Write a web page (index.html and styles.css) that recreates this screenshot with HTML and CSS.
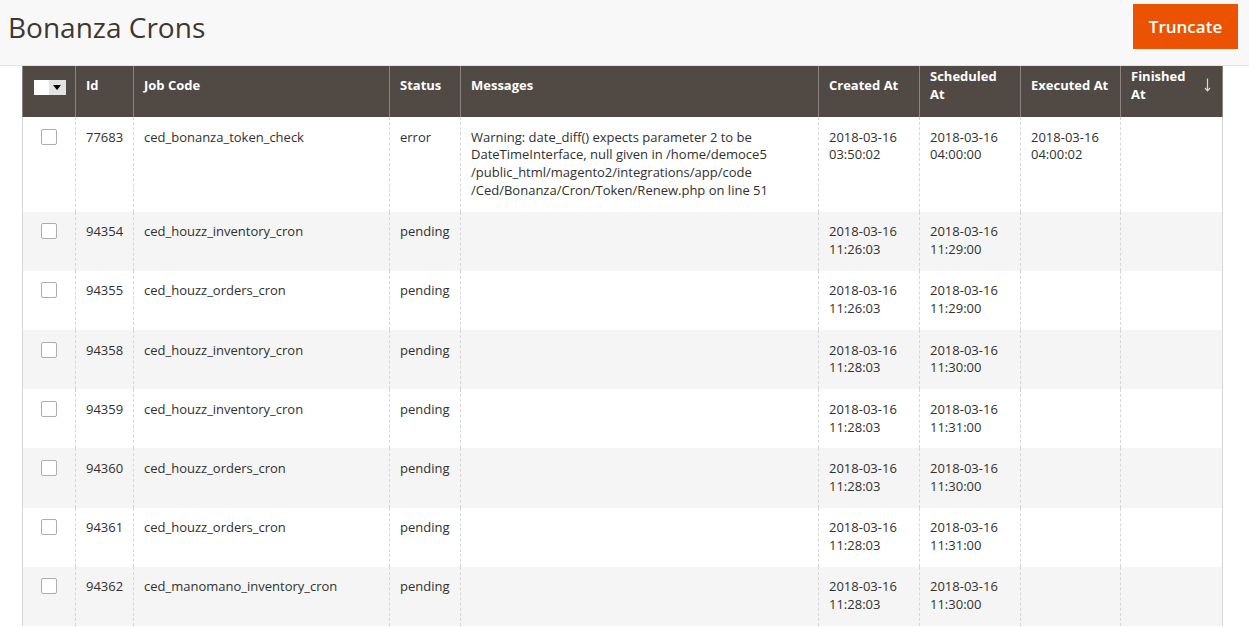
FILE: index.html
```html
<!DOCTYPE html>
<html lang="en">
<head>
  <meta charset="UTF-8">
  <title>Bonanza Crons</title>
  <link rel="stylesheet" href="styles.css">
</head>
<body>

  <div class="page-header">
    <h1 class="page-title">Bonanza Crons</h1>
    <button class="action-primary">Truncate</button>
  </div>

  <div class="grid-wrap">
    <table class="data-grid">
      <colgroup>
        <col style="width:53px">
        <col style="width:58px">
        <col style="width:256px">
        <col style="width:71px">
        <col style="width:358px">
        <col style="width:101px">
        <col style="width:101px">
        <col style="width:100px">
        <col style="width:102px">
      </colgroup>
      <thead>
        <tr>
          <th class="col-select">
            <span class="mass-select"><span class="mass-box"></span><span class="mass-toggle"></span></span>
          </th>
          <th>Id</th>
          <th>Job Code</th>
          <th>Status</th>
          <th>Messages</th>
          <th>Created At</th>
          <th>Scheduled At</th>
          <th>Executed At</th>
          <th class="sorted">Finished At
            <svg class="sort-arrow" width="7" height="14" viewBox="0 0 7 14">
              <path d="M3.5 0.5 V12.5 M1 10 L3.5 12.8 L6 10" fill="none" stroke="#d9d6d3" stroke-width="1.2"/>
            </svg>
          </th>
        </tr>
      </thead>
      <tbody>
        <tr>
          <td class="col-select"><span class="checkbox"></span></td>
          <td>77683</td>
          <td>ced_bonanza_token_check</td>
          <td>error</td>
          <td>Warning: date_diff() expects parameter 2 to be DateTimeInterface, null given in /home/democe5 /public_html/magento2/integrations/app/code /Ced/Bonanza/Cron/Token/Renew.php on line 51</td>
          <td>2018-03-16 03:50:02</td>
          <td>2018-03-16 04:00:00</td>
          <td>2018-03-16 04:00:02</td>
          <td></td>
        </tr>
        <tr>
          <td class="col-select"><span class="checkbox"></span></td>
          <td>94354</td>
          <td>ced_houzz_inventory_cron</td>
          <td>pending</td>
          <td></td>
          <td>2018-03-16 11:26:03</td>
          <td>2018-03-16 11:29:00</td>
          <td></td>
          <td></td>
        </tr>
        <tr>
          <td class="col-select"><span class="checkbox"></span></td>
          <td>94355</td>
          <td>ced_houzz_orders_cron</td>
          <td>pending</td>
          <td></td>
          <td>2018-03-16 11:26:03</td>
          <td>2018-03-16 11:29:00</td>
          <td></td>
          <td></td>
        </tr>
        <tr>
          <td class="col-select"><span class="checkbox"></span></td>
          <td>94358</td>
          <td>ced_houzz_inventory_cron</td>
          <td>pending</td>
          <td></td>
          <td>2018-03-16 11:28:03</td>
          <td>2018-03-16 11:30:00</td>
          <td></td>
          <td></td>
        </tr>
        <tr>
          <td class="col-select"><span class="checkbox"></span></td>
          <td>94359</td>
          <td>ced_houzz_inventory_cron</td>
          <td>pending</td>
          <td></td>
          <td>2018-03-16 11:28:03</td>
          <td>2018-03-16 11:31:00</td>
          <td></td>
          <td></td>
        </tr>
        <tr>
          <td class="col-select"><span class="checkbox"></span></td>
          <td>94360</td>
          <td>ced_houzz_orders_cron</td>
          <td>pending</td>
          <td></td>
          <td>2018-03-16 11:28:03</td>
          <td>2018-03-16 11:30:00</td>
          <td></td>
          <td></td>
        </tr>
        <tr>
          <td class="col-select"><span class="checkbox"></span></td>
          <td>94361</td>
          <td>ced_houzz_orders_cron</td>
          <td>pending</td>
          <td></td>
          <td>2018-03-16 11:28:03</td>
          <td>2018-03-16 11:31:00</td>
          <td></td>
          <td></td>
        </tr>
        <tr>
          <td class="col-select"><span class="checkbox"></span></td>
          <td>94362</td>
          <td>ced_manomano_inventory_cron</td>
          <td>pending</td>
          <td></td>
          <td>2018-03-16 11:28:03</td>
          <td>2018-03-16 11:30:00</td>
          <td></td>
          <td></td>
        </tr>
      </tbody>
    </table>
  </div>

</body>
</html>
```

FILE: styles.css
```css
body {
  margin: 0;
  font-family: "Open Sans", Arial, sans-serif;
  font-size: 13px;
  color: #303030;
  background: #fff;
  overflow: hidden;
}

.page-header {
  display: flex;
  justify-content: space-between;
  align-items: flex-start;
  height: 66px;
  background: #f8f8f8;
  border-bottom: 1px solid #e3e3e3;
  box-sizing: border-box;
  padding: 4px 11px 0 8px;
}

.page-title {
  margin: 0;
  font-size: 28px;
  font-weight: 400;
  color: #41362f;
  line-height: 46px;
}

.action-primary {
  background: #eb5202;
  border: 1px solid #eb5202;
  color: #fff;
  font-family: "Open Sans", Arial, sans-serif;
  font-size: 17px;
  font-weight: 600;
  width: 105px;
  height: 45px;
  padding: 0;
  cursor: pointer;
}

.grid-wrap {
  padding: 0 27px 0 22px;
}

.data-grid {
  width: 1200px;
  table-layout: fixed;
  border-collapse: collapse;
  border-left: 1px solid #d6d6d6;
  border-right: 1px solid #d6d6d6;
}

.data-grid th {
  background: #514943;
  color: #fff;
  font-weight: 700;
  text-align: left;
  vertical-align: middle;
  line-height: 18px;
  height: 36px;
  padding: 1px 10px 14px 10px;
  border-left: 1px solid #8a837f;
  border-right: 1px solid #8a837f;
  position: relative;
}

.data-grid th.sorted {
  padding-right: 28px;
}

.sort-arrow {
  position: absolute;
  right: 11px;
  top: 12px;
}

.data-grid th.col-select {
  text-align: center;
  padding-left: 0;
  padding-right: 0;
}

.mass-select {
  display: inline-flex;
  vertical-align: middle;
  margin-top: 2px;
  margin-left: 2px;
}

.mass-box {
  width: 15px;
  height: 15px;
  background: #fff;
}

.mass-toggle {
  width: 17px;
  height: 15px;
  background: #e3e3e3;
  position: relative;
}

.mass-toggle::after {
  content: "";
  position: absolute;
  left: 4px;
  top: 5px;
  border-left: 4px solid transparent;
  border-right: 4px solid transparent;
  border-top: 5px solid #000;
}

.data-grid td {
  vertical-align: top;
  line-height: 17.75px;
  padding: 11.5px 10px 12.2px 10px;
  border-left: 1px dashed #d6d6d6;
  border-right: 1px dashed #d6d6d6;
}

.data-grid tbody tr:nth-child(even) td {
  background: #f5f5f5;
}

.data-grid td.col-select {
  text-align: center;
  padding-left: 0;
  padding-right: 0;
}

.checkbox {
  display: inline-block;
  width: 14px;
  height: 14px;
  border: 1px solid #adadad;
  border-radius: 2px;
  background: #fff;
  vertical-align: top;
  margin-top: 0;
}
```
